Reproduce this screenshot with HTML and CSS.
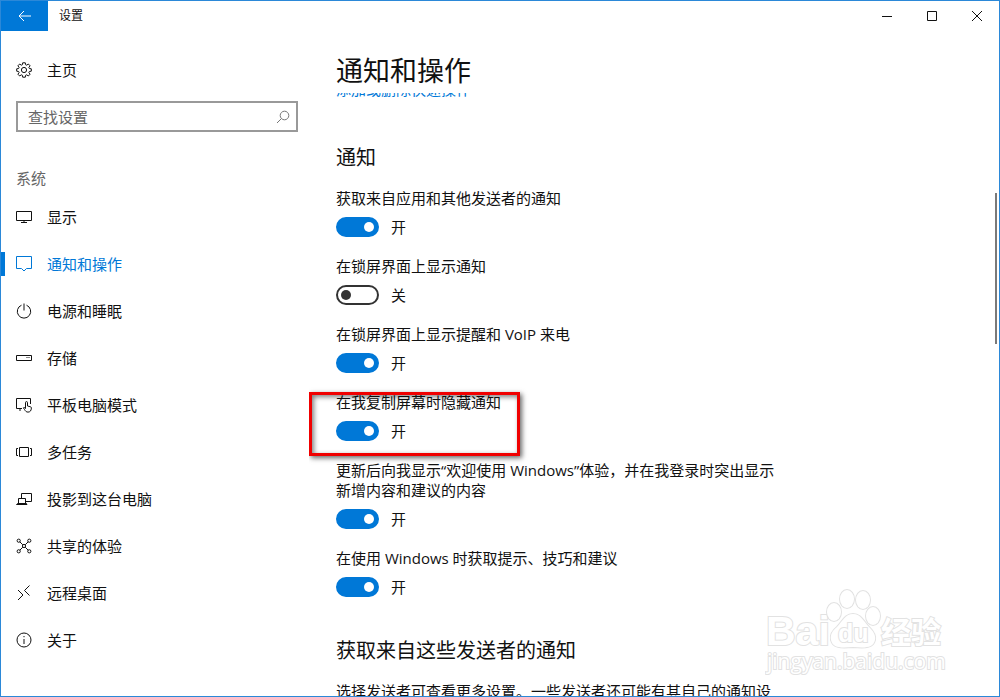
FILE: index.html
```
<!DOCTYPE html>
<html lang="zh-CN">
<head>
    <meta charset="UTF-8">
    <meta name="viewport" content="width=device-width, initial-scale=1.0">
    <title>设置</title>
    <link rel="stylesheet" href="styles.css">
</head>
<body>
    <header class="titlebar">
        <button class="back" aria-label="返回">
            <svg width="14" height="12" viewBox="0 0 14 12"><path d="M6 1L1 6l5 5M1 6h12"/></svg>
        </button>
        <span class="window-title">设置</span>
        <div class="window-buttons">
            <button aria-label="最小化"><svg width="12" height="12" viewBox="0 0 12 12"><path d="M1 6.5h10"/></svg></button>
            <button aria-label="最大化"><svg width="12" height="12" viewBox="0 0 12 12"><path d="M1.5 1.5h9v9h-9z"/></svg></button>
            <button aria-label="关闭"><svg width="12" height="12" viewBox="0 0 12 12"><path d="M1 1l10 10M11 1L1 11"/></svg></button>
        </div>
    </header>

    <div class="layout">
        <nav class="sidebar">
            <a class="home" href="#">
                <svg class="icon" viewBox="0 0 16 16"><path d="M6.7.8h2.6l.3 1.9 1.1.5 1.6-1.2 1.8 1.8-1.2 1.6.5 1.1 1.9.3v2.4l-1.9.3-.5 1.1 1.2 1.6-1.8 1.8-1.6-1.2-1.1.5-.3 1.9H6.7l-.3-1.9-1.1-.5L3.7 14l-1.8-1.8 1.2-1.6-.5-1.1-1.9-.3V6.8l1.9-.3.5-1.1-1.2-1.6L3.7 2l1.6 1.2 1.1-.5z"/><circle cx="8" cy="8" r="2.6"/></svg>
                主页
            </a>
            <div class="search">
                <input type="text" placeholder="查找设置" aria-label="查找设置">
                <svg width="14" height="14" viewBox="0 0 14 14"><circle cx="8.5" cy="5.5" r="4.3"/><path d="M5.4 8.6L1 13"/></svg>
            </div>
            <h2>系统</h2>
            <ul>
                <li><a href="#">
                    <svg class="icon" viewBox="0 0 16 16"><path d="M.5 2.5h15v9H.5zM8 11.500v2M5 13.500h6"/></svg>显示</a></li>
                <li><a href="#" class="active">
                    <svg class="icon" viewBox="0 0 16 16"><path d="M.5.5h15v12h-5L8 15l-2.500-2.500h-5z"/></svg>通知和操作</a></li>
                <li><a href="#">
                    <svg class="icon" viewBox="0 0 16 16"><path d="M5.5 2.200a6.700 6.700 0 1 0 5 0M8 .5v7"/></svg>电源和睡眠</a></li>
                <li><a href="#">
                    <svg class="icon" viewBox="0 0 16 16"><path d="M.5 5.500h15v5H.5zM10.500 7.500h1M12.500 7.500h1"/></svg>存储</a></li>
                <li><a href="#">
                    <svg class="icon" viewBox="0 0 16 16"><path d="M6 11.500H.5v-10h14V7M4 11.500v2.500M9.500 11.500V5.600a1 1 0 0 1 2 0V9l3 .8q1 .3.900 1.300c-.2 2.700-1.400 4-3.400 4-1.800 0-2.500-1-3.500-2.600l-1.100-1.700c.8-.7 1.400-.2 2.100.7"/></svg>平板电脑模式</a></li>
                <li><a href="#">
                    <svg class="icon" viewBox="0 0 16 16"><path d="M3.500 3.500h9v9h-9zM2 4.500H.5v7H2M14 4.500h1.500v7H14"/></svg>多任务</a></li>
                <li><a href="#">
                    <svg class="icon" viewBox="0 0 16 16"><path d="M5.500 7V2.500h10v8H10M2.500 12.500v-5h7v5M.5 13.500l1-1h9l.5 1z"/></svg>投影到这台电脑</a></li>
                <li><a href="#">
                    <svg class="icon" viewBox="0 0 16 16"><path d="M3.800 3.800l3 3M12.200 3.800l-3 3M6.800 9.200l-3 3M9.200 9.200l3 3"/><circle cx="2.700" cy="2.700" r="1.600"/><circle cx="13.300" cy="2.700" r="1.600"/><circle cx="8" cy="8" r="1.600"/><circle cx="2.700" cy="13.300" r="1.600"/><circle cx="13.300" cy="13.300" r="1.600"/></svg>共享的体验</a></li>
                <li><a href="#">
                    <svg class="icon" viewBox="0 0 16 16"><path d="M2 5l5 5-5 5M13.500.5l-5 5 5 5"/></svg>远程桌面</a></li>
                <li><a href="#">
                    <svg class="icon" viewBox="0 0 16 16"><circle cx="8" cy="8" r="7"/><path d="M8 7v5M8 4v1.200"/></svg>关于</a></li>
            </ul>
        </nav>

        <main class="content">
            <h1>通知和操作</h1>
            <div class="pane">
                <a class="quick-link" href="#">添加或删除快速操作</a>

                <h3>通知</h3>
                <div class="setting">
                    <label for="s1">获取来自应用和其他发送者的通知</label>
                    <div class="switch"><input type="checkbox" id="s1" checked><span>开</span></div>
                </div>
                <div class="setting">
                    <label for="s2">在锁屏界面上显示通知</label>
                    <div class="switch"><input type="checkbox" id="s2"><span>关</span></div>
                </div>
                <div class="setting">
                    <label for="s3">在锁屏界面上显示提醒和 VoIP 来电</label>
                    <div class="switch"><input type="checkbox" id="s3" checked><span>开</span></div>
                </div>
                <div class="setting marked">
                    <label for="s4">在我复制屏幕时隐藏通知</label>
                    <div class="switch"><input type="checkbox" id="s4" checked><span>开</span></div>
                </div>
                <div class="setting">
                    <label for="s5">更新后向我显示“欢迎使用 Windows”体验，并在我登录时突出显示新增内容和建议的内容</label>
                    <div class="switch"><input type="checkbox" id="s5" checked><span>开</span></div>
                </div>
                <div class="setting">
                    <label for="s6">在使用 Windows 时获取提示、技巧和建议</label>
                    <div class="switch"><input type="checkbox" id="s6" checked><span>开</span></div>
                </div>

                <h3>获取来自这些发送者的通知</h3>
                <p>选择发送者可查看更多设置。一些发送者还可能有其自己的通知设置。</p>
            </div>
        </main>
    </div>

    <div class="scroll-thumb"></div>

    <svg class="watermark" width="184" height="92" viewBox="0 0 184 92">
        <text class="latin" x="1" y="59" font-size="41">Bai</text>
        <ellipse cx="69" cy="26" rx="7" ry="9"/>
        <ellipse cx="82" cy="13" rx="7" ry="9"/>
        <ellipse cx="98" cy="14" rx="7" ry="9"/>
        <ellipse cx="108" cy="30" rx="7" ry="9"/>
        <path d="M88 28c-8 0-11 8-16 13-5 4-7 8-6 13 2 8 9 8 22 7 13 1 20 1 22-7 1-5-2-9-6-13-5-5-8-13-16-13z"/>
        <text class="latin" x="73" y="56" font-size="25">du</text>
        <text class="cjk" x="116" y="57" font-size="30">经验</text>
        <text class="url" x="2" y="83" font-size="21">jingyan.baidu.com</text>
    </svg>
</body>
</html>
```

FILE: styles.css
```
*, *::before, *::after {
    box-sizing: border-box;
}
body {
    position: relative;
    display: flex;
    flex-direction: column;
    height: 100vh;
    margin: 0;
    border: 1px solid #2b88d8;
    background-color: white;
    color: #111;
    font-family: "Open Sans", "Noto Sans CJK SC", sans-serif;
    font-size: 15px;
    line-height: 20px;
    overflow: hidden;
}
h1, h2, h3, p, ul {
    margin: 0;
    padding: 0;
    font-weight: normal;
}
svg {
    fill: none;
    stroke: currentColor;
}
a {
    color: inherit;
    text-decoration: none;
}
button {
    display: flex;
    align-items: center;
    justify-content: center;
    height: 30px;
    padding: 0;
    border: none;
    background: none;
    color: #111;
}

/* title bar */
.titlebar {
    display: flex;
    align-items: center;
    height: 30px;
    flex-shrink: 0;
}
.back {
    width: 47px;
    background-color: #0078d7;
    color: white;
}
.window-title {
    margin-left: 11px;
    font-size: 12px;
}
.window-buttons {
    display: flex;
    margin-left: auto;
}
.window-buttons button {
    width: 45px;
}

.layout {
    display: flex;
    flex: 1;
    min-height: 0;
}

/* sidebar */
.sidebar {
    width: 335px;
    flex-shrink: 0;
    padding-top: 29px;
}
.icon {
    width: 16px;
    height: 16px;
    margin-right: 15px;
    flex-shrink: 0;
}
.home {
    display: flex;
    align-items: center;
    padding-left: 15px;
}
.search {
    display: flex;
    align-items: center;
    height: 31px;
    margin: 21px 38px 36px 15px;
    padding: 0 6px 0 10px;
    border: 2px solid #999;
    color: #777;
}
.search input {
    flex: 1;
    min-width: 0;
    padding: 0;
    border: none;
    outline: none;
    background: none;
    font: inherit;
}
.search input::placeholder {
    color: #666;
}
.sidebar h2 {
    margin-bottom: 5px;
    padding-left: 15px;
    color: #666;
    font-size: 15px;
}
.sidebar ul {
    list-style: none;
}
.sidebar li a {
    position: relative;
    display: flex;
    align-items: center;
    height: 47px;
    padding-left: 15px;
}
.sidebar .active {
    color: #0078d7;
}
.sidebar .active::before {
    content: "";
    position: absolute;
    left: 0;
    width: 4px;
    height: 24px;
    background-color: #0078d7;
}

/* settings */
.content {
    display: flex;
    flex-direction: column;
    flex: 1;
    min-width: 0;
    padding-top: 20px;
}
h1 {
    margin-bottom: 2px;
    font-size: 27px;
    line-height: 40px;
}
.pane {
    flex: 1;
    min-height: 0;
    margin-left: -27px;
    padding-left: 27px;
    overflow: hidden;
}
/* the list is scrolled part of the way past this link */
.quick-link {
    display: block;
    margin-top: -14px;
    color: #0078d7;
}
h3 {
    margin: 46px 0 17px;
    font-size: 20px;
    line-height: 26px;
}
.setting {
    position: relative;
    max-width: 444px;
    margin-bottom: 19px;
}
.setting label {
    display: block;
    margin-bottom: 9px;
}
.setting + h3 {
    margin-top: 41px;
}
.pane p {
    max-width: 444px;
}
.switch {
    display: flex;
    align-items: center;
    gap: 12px;
}
.switch input {
    display: flex;
    align-items: center;
    appearance: none;
    width: 43px;
    height: 20px;
    margin: 0;
    padding: 0 3px;
    border: 2px solid #333;
    border-radius: 10px;
}
.switch input::before {
    content: "";
    width: 10px;
    height: 10px;
    border-radius: 50%;
    background-color: #333;
}
.switch input:checked {
    justify-content: flex-end;
    border-color: #0078d7;
    background-color: #0078d7;
}
.switch input:checked::before {
    background-color: white;
}
.marked::after {
    content: "";
    position: absolute;
    top: 0;
    left: -27px;
    width: 211px;
    height: 64px;
    border: 3px solid #f00000;
    box-shadow: 2px 2px 5px rgba(0, 0, 0, 0.6), inset 2px 2px 5px rgba(0, 0, 0, 0.5);
    pointer-events: none;
}

.scroll-thumb {
    position: absolute;
    top: 192px;
    right: 2px;
    width: 2px;
    height: 151px;
    background-color: #7a7a7a;
}

.watermark {
    position: absolute;
    right: 50px;
    bottom: 18px;
    fill: white;
    stroke: #e2e2e2;
    stroke-width: 2px;
    paint-order: stroke;
    pointer-events: none;
}
.watermark .latin {
    font-family: "Liberation Sans", sans-serif;
    font-weight: bold;
}
.watermark .cjk {
    font-family: "Noto Sans CJK SC", sans-serif;
    font-weight: bold;
}
```
